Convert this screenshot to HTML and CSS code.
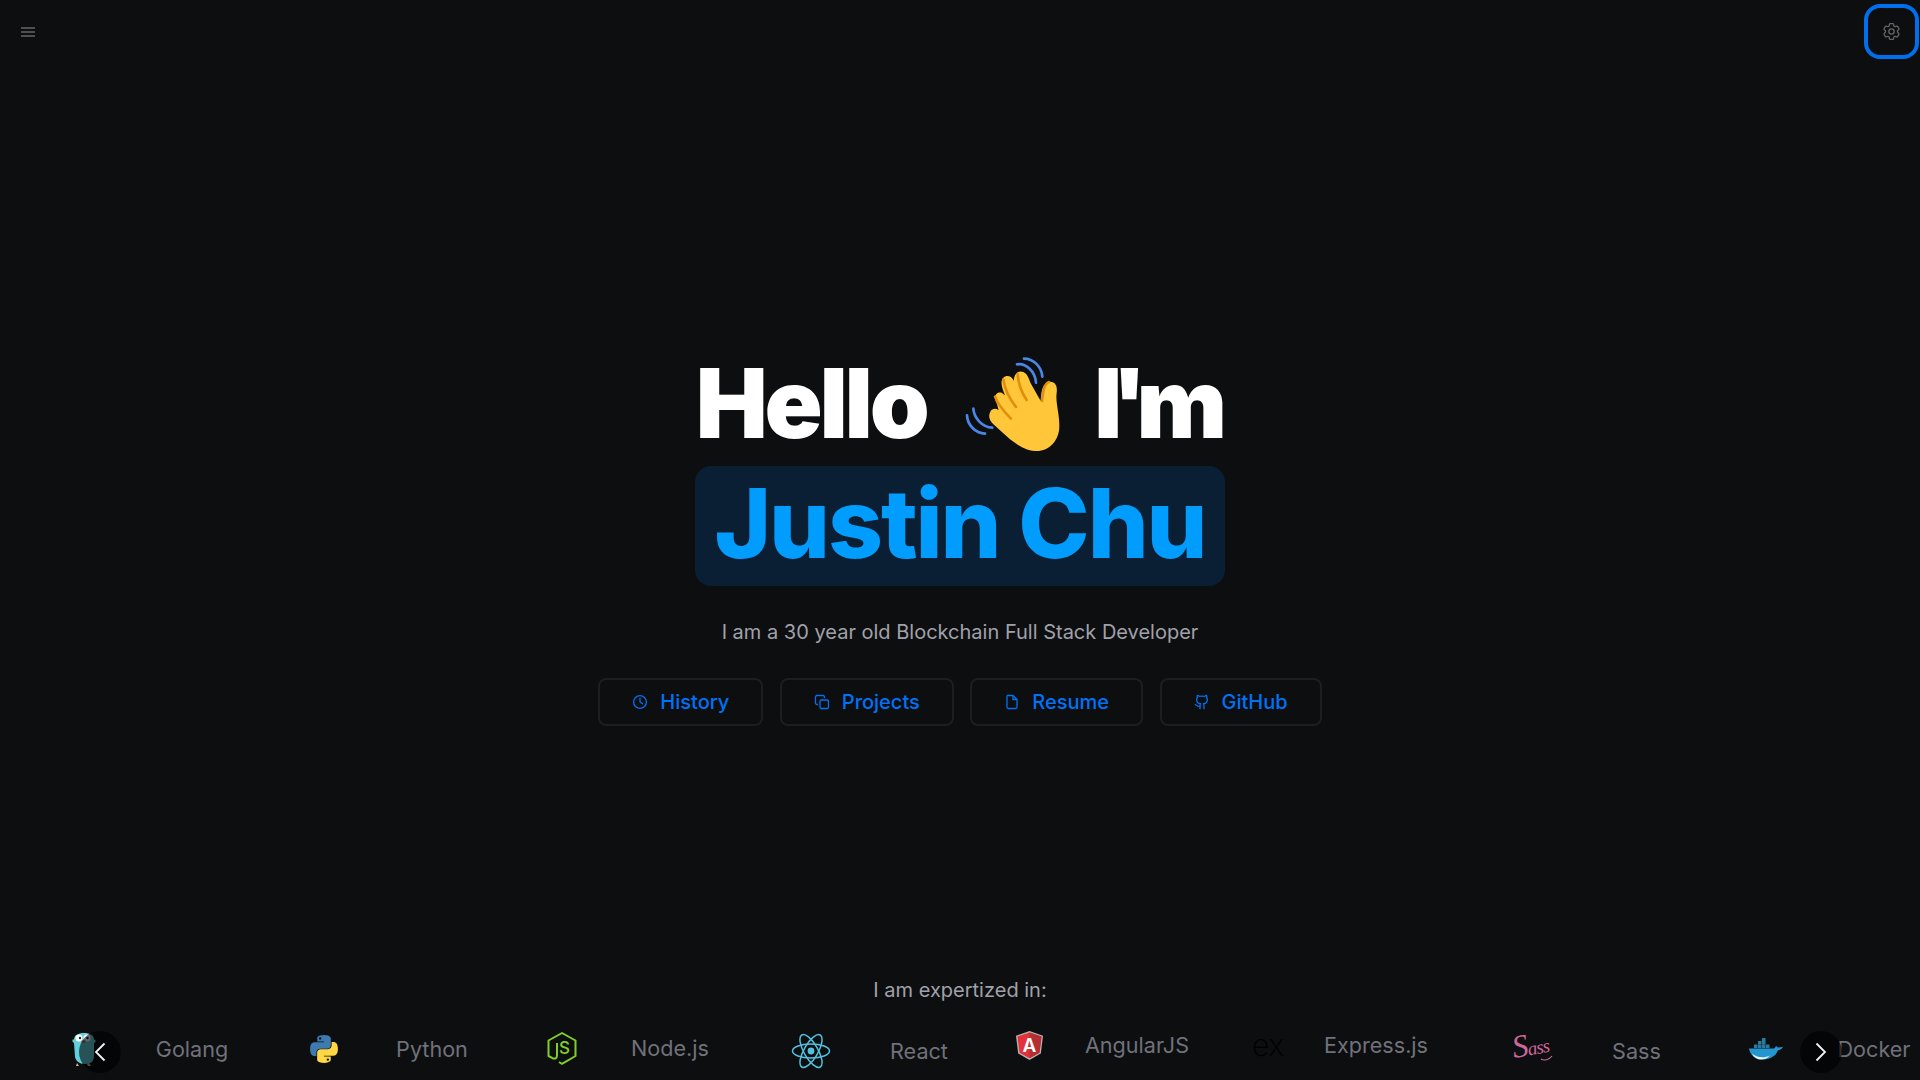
FILE: index.html
```html
<!DOCTYPE html>
<html lang="en">
<head>
    <meta charset="UTF-8">
    <meta name="viewport" content="width=device-width, initial-scale=1.0">
    <title>Justin Chu</title>
    <link rel="stylesheet" href="styles.css">
</head>
<body>
    <header class="topbar">
        <button class="menu-btn" aria-label="Menu">
            <svg width="14" height="10" viewBox="0 0 14 10"><path d="M0 1h14M0 5h14M0 9h14" stroke="#63656a" stroke-width="1.6"/></svg>
        </button>
        <button class="settings-btn" aria-label="Settings">
            <svg width="21" height="21" viewBox="0 0 24 24" fill="none" stroke="#63656a" stroke-width="1.500" stroke-linejoin="round"><path d="M9.594 3.940c.090-.542.560-.940 1.110-.940h2.593c.550 0 1.020.398 1.110.940l.213 1.281c.063.374.313.686.645.870.074.040.147.083.220.127.324.196.720.257 1.075.124l1.217-.456a1.125 1.125 0 011.370.490l1.296 2.247a1.125 1.125 0 01-.260 1.431l-1.003.827c-.293.240-.438.613-.431.992a6.759 6.759 0 010 .255c-.007.378.138.750.430.990l1.005.828c.424.350.534.954.260 1.430l-1.298 2.247a1.125 1.125 0 01-1.369.491l-1.217-.456c-.355-.133-.750-.072-1.076.124a6.570 6.570 0 01-.220.128c-.331.183-.581.495-.644.869l-.213 1.280c-.090.543-.560.941-1.110.941h-2.594c-.550 0-1.020-.398-1.110-.940l-.213-1.281c-.062-.374-.312-.686-.644-.870a6.520 6.520 0 01-.220-.127c-.325-.196-.720-.257-1.076-.124l-1.217.456a1.125 1.125 0 01-1.369-.490l-1.297-2.247a1.125 1.125 0 01.260-1.431l1.004-.827c.292-.240.437-.613.430-.992a6.932 6.932 0 010-.255c.007-.378-.138-.750-.430-.990l-1.004-.828a1.125 1.125 0 01-.260-1.430l1.297-2.247a1.125 1.125 0 011.370-.491l1.216.456c.356.133.751.072 1.076-.124.072-.044.146-.087.220-.128.332-.183.582-.495.644-.869l.214-1.281z"/><circle cx="12" cy="12" r="3"/></svg>
        </button>
    </header>

    <main class="hero">
        <h1 class="hello">
            <span class="hello-word">Hello</span>
            <svg class="wave" width="130" height="115" viewBox="0 0 390 345">
                <path d="M121 197C126 188 136 186 146 192L140 172C128 150 140 136 155 140L165 148C155 125 150 105 160 95C172 85 186 92 192 105C190 90 200 75 215 77C230 78 236 95 242 112L272 165C274 140 275 110 300 107C320 108 322 125 320 140C316 170 328 200 328 240C328 285 295 318 255 315C225 313 200 295 180 280L130 235C118 222 114 210 121 197Z" fill="#ffc63a"/>
                <g fill="none" stroke="#e08f0b" stroke-width="8" stroke-linecap="round">
                    <path d="M135 152C145 180 165 200 183 218"/>
                    <path d="M160 100C165 135 180 160 198 183"/>
                    <path d="M203 85C205 115 215 140 230 162"/>
                    <path d="M297 108C282 112 278 140 276 165"/>
                </g>
                <g fill="none" stroke="#4a86e8" stroke-width="8" stroke-linecap="round">
                    <path d="M201 55C226 50 256 75 258 110"/>
                    <path d="M222 38C250 38 275 62 277 92"/>
                    <path d="M51 208C52 235 75 262 105 263"/>
                    <path d="M70 188C72 215 95 243 127 245"/>
                </g>
            </svg>
            <span class="im-word">I'm</span>
        </h1>
        <div class="name">Justin Chu</div>
        <p class="intro">I am a 30 year old Blockchain Full Stack Developer</p>
        <nav class="links">
            <a class="link" href="#history">
                <svg width="16" height="16" viewBox="0 0 16 16" fill="none" stroke="currentColor" stroke-width="1.3"><circle cx="8" cy="8" r="6.4"/><path d="M8 4.2V8l2.4 1.6" stroke-linecap="round"/></svg>
                History
            </a>
            <a class="link" href="#projects">
                <svg width="16" height="16" viewBox="0 0 16 16" fill="none" stroke="currentColor" stroke-width="1.3" stroke-linejoin="round"><rect x="6" y="6" width="8.5" height="8.5" rx="1.4"/><path d="M10.5 4V3A1.5 1.5 0 0 0 9 1.5H3A1.5 1.5 0 0 0 1.5 3v6A1.5 1.5 0 0 0 3 10.500H4"/></svg>
                Projects
            </a>
            <a class="link" href="#resume">
                <svg width="16" height="16" viewBox="0 0 16 16" fill="none" stroke="currentColor" stroke-width="1.3" stroke-linejoin="round"><path d="M3.500 1.500H9L13 5.500V13A1.500 1.500 0 0 1 11.500 14.500H4.500A1.500 1.500 0 0 1 3 13V2Z"/><path d="M9 1.500V5.500H13"/></svg>
                Resume
            </a>
            <a class="link" href="#github">
                <svg width="16" height="16" viewBox="0 0 24 24" fill="none" stroke="currentColor" stroke-width="2" stroke-linecap="round" stroke-linejoin="round"><path d="M15 22v-4a4.800 4.800 0 0 0-1-3.500c3 0 6-2 6-5.500.080-1.250-.270-2.480-1-3.500.280-1.150.280-2.350 0-3.500 0 0-1 0-3 1.500-2.640-.500-5.360-.500-8 0C6 2 5 2 5 2c-.300 1.150-.300 2.350 0 3.500A5.400 5.400 0 0 0 4 9c0 3.500 3 5.500 6 5.500-.390.490-.680 1.050-.850 1.650S8.930 17.380 9 18v4"/><path d="M9 18c-4.510 2-5-2-7-2"/></svg>
                GitHub
            </a>
        </nav>
    </main>

    <section class="skills">
        <p class="skills-title">I am expertized in:</p>
        <div class="strip">
            <div class="tech tech-go">
                <span class="tech-icon">
                    <svg width="24" height="34" viewBox="0 0 24 34">
                        <path d="M2 8C2 3 6 1 12 1s10 2 10 7l1-.5c1 1 1 3-1 3.500V24c0 5-3 8-9 8S4 29 3 25L2 11C0 10 0 8 1 7Z" fill="#62cfdd"/>
                        <circle cx="7" cy="6" r="3.500" fill="#fff"/><circle cx="8" cy="6" r="1.200" fill="#222"/>
                        <circle cx="15" cy="6" r="3.500" fill="#fff"/><circle cx="15.500" cy="6" r="1.200" fill="#222"/>
                        <ellipse cx="11.500" cy="9.500" rx="2.500" ry="1.600" fill="#8a7a66"/>
                        <path d="M5 31l-1 3h3ZM15 32l1 2h3l-2-3Z" fill="#d9b382"/>
                    </svg>
                </span>
                <span class="tech-name">Golang</span>
            </div>
            <div class="tech tech-py">
                <span class="tech-icon">
                    <svg width="30" height="30" viewBox="0 0 28 28">
                        <path d="M13.900 1C7.300 1 7.700 3.900 7.700 3.900v3h6.300v.9H5.200S1 7.300 1 14c0 6.700 3.700 6.500 3.700 6.500h2.200v-3.100s-.1-3.700 3.700-3.700h6.300s3.500.1 3.500-3.400V4.500S20.900 1 13.900 1zm-3.500 2a1.100 1.100 0 1 1 0 2.200 1.100 1.100 0 0 1 0-2.200z" fill="#3c7ab0"/>
                        <path d="M14.100 27c6.600 0 6.200-2.900 6.200-2.900v-3H14v-.9h8.800S27 20.700 27 14c0-6.700-3.700-6.500-3.700-6.500h-2.200v3.100s.1 3.700-3.700 3.700h-6.300s-3.500-.1-3.500 3.400v6.200S7.100 27 14.100 27zm3.500-2a1.100 1.100 0 1 1 0-2.200 1.100 1.100 0 0 1 0 2.200z" fill="#ffd643"/>
                    </svg>
                </span>
                <span class="tech-name">Python</span>
            </div>
            <div class="tech tech-node">
                <span class="tech-icon">
                    <svg width="30" height="33" viewBox="0 0 30 33">
                        <path d="M12 30l3 1.800L28.500 24V8.500L15 1 1.500 8.500V24l4 2.200c2.500 1 4.500.2 4.500-3V11" fill="none" stroke="#83cd29" stroke-width="2" stroke-linejoin="round"/>
                        <text class="node-s" x="12" y="22">S</text>
                    </svg>
                </span>
                <span class="tech-name">Node.js</span>
            </div>
            <div class="tech tech-react">
                <span class="tech-icon">
                    <svg width="40" height="36" viewBox="0 0 40 36" fill="none" stroke="#53c1de" stroke-width="1.500">
                        <ellipse cx="20" cy="18" rx="18.500" ry="7"/>
                        <ellipse cx="20" cy="18" rx="18.500" ry="7" transform="rotate(60 20 18)"/>
                        <ellipse cx="20" cy="18" rx="18.500" ry="7" transform="rotate(120 20 18)"/>
                        <circle cx="20" cy="18" r="3.400" fill="#53c1de" stroke="none"/>
                    </svg>
                </span>
                <span class="tech-name">React</span>
            </div>
            <div class="tech tech-ng">
                <span class="tech-icon">
                    <svg width="27" height="29" viewBox="0 0 27 29">
                        <path d="M13.500 0L27 4.700 24.800 22.500 13.500 29 2.200 22.500 0 4.700Z" fill="#b3b3b3"/>
                        <path d="M13.500 1.500L25.500 5.500 23.500 21.700 13.500 27.300 3.500 21.700 1.500 5.500Z" fill="#e23237"/>
                        <path d="M13.500 1.500L25.500 5.500 23.500 21.700 13.500 27.300Z" fill="#b52e31"/>
                        <text class="ng-a" x="13.500" y="20.500">A</text>
                    </svg>
                </span>
                <span class="tech-name">AngularJS</span>
            </div>
            <div class="tech tech-ex">
                <span class="tech-icon"><span class="ex-logo">ex</span></span>
                <span class="tech-name">Express.js</span>
            </div>
            <div class="tech tech-sass">
                <span class="tech-icon">
                    <svg class="sass-logo" width="44" height="44" viewBox="0 0 44 44">
                        <text class="sass-mark" x="3" y="29" transform="rotate(-10 3 29)"><tspan class="sass-big">S</tspan>ass</text>
                        <path d="M30 30c3 2 8 1 11-3" fill="none" stroke="#cd6799" stroke-width="1.200"/>
                    </svg>
                </span>
                <span class="tech-name">Sass</span>
            </div>
            <div class="tech tech-docker">
                <span class="tech-icon">
                    <svg width="36" height="22" viewBox="0 0 36 22">
                        <path d="M1 10.500h24c1 0 2-.5 3-2.500l2 1.500 5-.5c-1 2-3 3-5 3.200C28 18 22 21.500 14 21.500 7 21.500 2 17 1 10.500Z" fill="#2396d0"/>
                        <path d="M4 15.500c4 4 12 5 18 2-3 3-6 4-9 4-4 0-7-2-9-6Z" fill="#e8f4fa"/>
                        <g fill="#2b7aa0">
                            <rect x="6" y="6.500" width="3.500" height="3.500"/><rect x="10" y="6.500" width="3.500" height="3.500"/><rect x="14" y="6.500" width="3.500" height="3.500"/><rect x="18" y="6.500" width="3.500" height="3.500"/>
                            <rect x="10" y="3" width="3.500" height="3.500"/><rect x="14" y="3" width="3.500" height="3.500"/><rect x="14" y="0" width="3.500" height="3"/>
                        </g>
                    </svg>
                </span>
                <span class="tech-name">Docker</span>
            </div>
            <button class="arrow arrow-left" aria-label="Previous">
                <svg width="12" height="20" viewBox="0 0 12 20"><path d="M10.500 1.500L2 10l8.500 8.500" fill="none" stroke="#f2f2f2" stroke-width="1.800"/></svg>
            </button>
            <button class="arrow arrow-right" aria-label="Next">
                <svg width="12" height="20" viewBox="0 0 12 20"><path d="M1.500 1.500L10 10l-8.500 8.500" fill="none" stroke="#f2f2f2" stroke-width="1.800"/></svg>
            </button>
        </div>
    </section>
</body>
</html>
```

FILE: styles.css
```css
html, body {
    height: 100%;
}
body {
    margin: 0;
    height: 1080px;
    display: flex;
    flex-direction: column;
    overflow: hidden;
    background-color: #0c0e10;
    color: #fff;
    font-family: Inter, "Liberation Sans", sans-serif;
}
button {
    background: none;
    border: 0;
    padding: 0;
    display: flex;
    align-items: center;
    justify-content: center;
}

/* top bar */
.topbar {
    height: 64px;
    display: flex;
    justify-content: space-between;
    align-items: center;
    padding-right: 1px;
}
.menu-btn {
    width: 56px;
    height: 64px;
}
.settings-btn {
    width: 55px;
    height: 55px;
    border: 4px solid #006fee;
    border-radius: 16px;
    box-sizing: border-box;
    margin-bottom: 1px;
}

/* hero */
.hero {
    flex: 1;
    display: flex;
    flex-direction: column;
    align-items: center;
    padding-top: 276px;
}
.hello {
    height: 126px;
    margin: 0;
    padding-right: 8px;
    display: flex;
    align-items: center;
    font-size: 96px;
    font-weight: 900;
}
.hello-word {
    letter-spacing: -3.300px;
}
.im-word {
    letter-spacing: -10.800px;
}
.wave {
    margin: 0 14px 0 24px;
}
.name {
    height: 120px;
    box-sizing: border-box;
    padding: 0 20px;
    border-radius: 16px;
    background-color: #0a1f33;
    color: #009dff;
    font-size: 96px;
    font-weight: 800;
    line-height: 114px;
    letter-spacing: -2.100px;
}
.intro {
    margin: 34px 0 0;
    font-size: 20px;
    line-height: 24px;
    color: #a1a1aa;
}
.links {
    margin-top: 34px;
    display: flex;
    gap: 16.500px;
}
.link {
    height: 48px;
    box-sizing: border-box;
    padding: 0 32px;
    display: flex;
    align-items: center;
    gap: 12px;
    border: 2px solid #1c1e22;
    border-radius: 8px;
    color: #0072f5;
    font-size: 20px;
    font-weight: 500;
    text-decoration: none;
}

/* tech strip */
.skills-title {
    margin: 0;
    text-align: center;
    font-size: 20px;
    line-height: 24px;
    color: #a1a1aa;
}
.strip {
    position: relative;
    height: 62px;
    margin-top: 16px;
    padding-left: 36px;
    display: flex;
    align-items: flex-start;
    overflow: hidden;
}
.tech {
    flex: none;
    display: flex;
    align-items: center;
    height: 40px;
    margin-top: 11px;
}
.tech-icon {
    width: 96px;
    flex: none;
    display: flex;
    justify-content: center;
}
.tech-name {
    width: 120px;
    flex: none;
    text-align: center;
    font-size: 21.6px;
    color: #71717a;
}
.tech-go { width: 240px; }
.tech-py { width: 238px; }
.tech-node { width: 249px; margin-top: 10px; }
.tech-react { width: 218px; margin-top: 13px; }
.tech-ng { width: 239px; margin-top: 7px; }
.tech-ex { width: 262.500px; margin-top: 7px; }
.tech-sass { width: 235.500px; margin-top: 13px; }
.tech-sass .tech-icon { width: 87px; margin-left: 7px; }
.tech-docker { width: 216px; }
.node-s {
    font-size: 17px;
    font-weight: 500;
    fill: #83cd29;
}
.ng-a {
    font-size: 19px;
    font-weight: 600;
    fill: #fff;
    text-anchor: middle;
}
.ex-logo {
    font-size: 30px;
    font-weight: 200;
    line-height: 30px;
    color: #000;
}
.sass-logo {
    overflow: visible;
}
.sass-mark {
    font-family: "Liberation Serif", serif;
    font-style: italic;
    font-size: 19px;
    letter-spacing: -1px;
    fill: #cd6799;
}
.sass-big {
    font-size: 32px;
}
.arrow {
    position: absolute;
    top: 13px;
    width: 42px;
    height: 42px;
    border-radius: 50%;
    background-color: rgba(0, 0, 0, 0.6);
}
.arrow-left { left: 79px; }
.arrow-right { left: 1800px; }
```
